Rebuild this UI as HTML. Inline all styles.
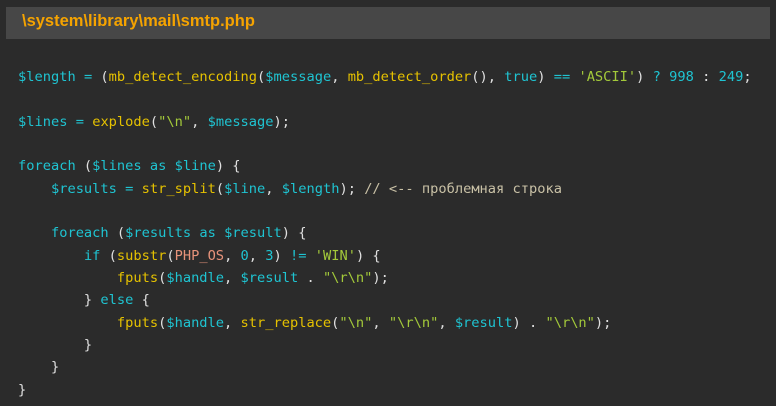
<!DOCTYPE html>
<html><head><meta charset="utf-8"><style>
html,body{margin:0;padding:0;background:#2b2b2b;width:776px;height:406px;overflow:hidden}
.h{position:absolute;left:6px;top:7px;width:764px;height:32px;background:#474747}
.h span{position:absolute;left:16px;top:5px;font:bold 16.5px "Liberation Sans",sans-serif;color:#f5a300}
pre{position:absolute;left:18px;top:66px;margin:0;font:13.7px/22.35px "DejaVu Sans Mono","Liberation Mono",monospace;color:#e0e0e0}
.v{color:#1fc4d2}.f{color:#e6c200}.s{color:#a3c93a}.c{color:#c9c1a6}.k{color:#1fc4d2}.o{color:#1fc4d2}.p{color:#e8937a}
</style></head><body>
<div class="h"><span>\system\library\mail\smtp.php</span></div>
<pre><span class="v">$length</span> <span class="o">=</span> (<span class="f">mb_detect_encoding</span>(<span class="v">$message</span>, <span class="f">mb_detect_order</span>(), <span class="k">true</span>) <span class="o">==</span> <span class="s">'ASCII'</span>) <span class="o">?</span> <span class="k">998</span> : <span class="k">249</span>;

<span class="v">$lines</span> <span class="o">=</span> <span class="f">explode</span>(<span class="s">"\n"</span>, <span class="v">$message</span>);

<span class="k">foreach</span> (<span class="v">$lines</span> <span class="k">as</span> <span class="v">$line</span>) {
    <span class="v">$results</span> <span class="o">=</span> <span class="f">str_split</span>(<span class="v">$line</span>, <span class="v">$length</span>); <span class="c">// &lt;-- проблемная строка</span>

    <span class="k">foreach</span> (<span class="v">$results</span> <span class="k">as</span> <span class="v">$result</span>) {
        <span class="k">if</span> (<span class="f">substr</span>(<span class="p">PHP_OS</span>, <span class="k">0</span>, <span class="k">3</span>) <span class="o">!=</span> <span class="s">'WIN'</span>) {
            <span class="f">fputs</span>(<span class="v">$handle</span>, <span class="v">$result</span> . <span class="s">"\r\n"</span>);
        } <span class="k">else</span> {
            <span class="f">fputs</span>(<span class="v">$handle</span>, <span class="f">str_replace</span>(<span class="s">"\n"</span>, <span class="s">"\r\n"</span>, <span class="v">$result</span>) . <span class="s">"\r\n"</span>);
        }
    }
}</pre>
</body></html>
